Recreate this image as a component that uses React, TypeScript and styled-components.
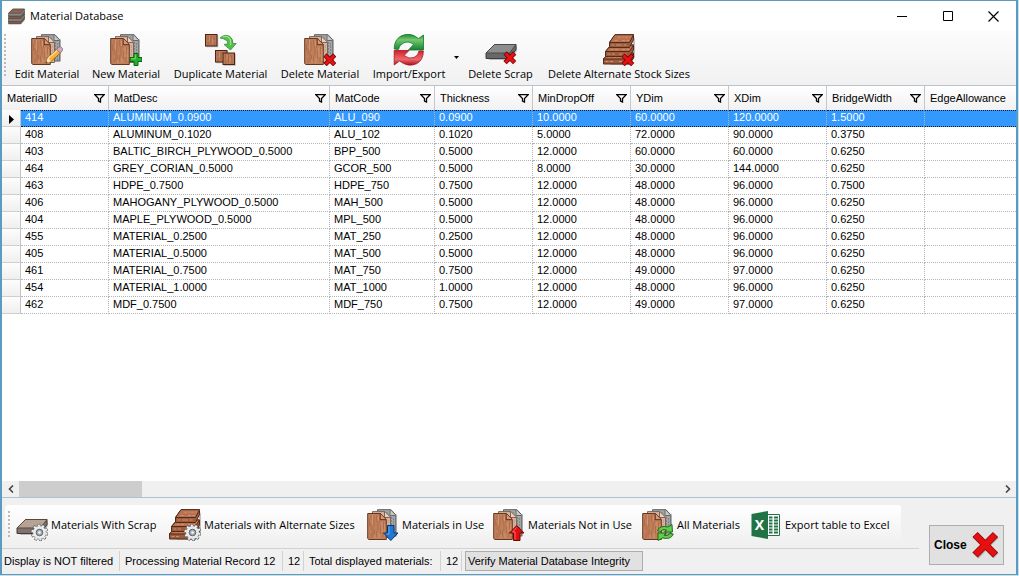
import React from "react";
import styled, { createGlobalStyle } from "styled-components";

const uiFont = `"Open Sans", "Noto Sans", sans-serif`;
const gridFont = `"Liberation Sans", Arial, sans-serif`;

const GlobalStyle = createGlobalStyle`
  * { box-sizing: border-box; }
  body { margin: 0; background: #cfdde4; }
  button { font: inherit; color: inherit; cursor: default; }
`;

const Window = styled.div`
  display: flex;
  flex-direction: column;
  min-height: calc(100vh - 1px);
  margin: 0 1px 1px 0;
  border: solid #5b9bbf;
  border-width: 1px 2px 1px 2px;
  background: #f0f0f0;
  color: #000;
  font: 11px/16px ${gridFont};
`;

const TitleBar = styled.header`
  display: flex;
  align-items: center;
  height: 30px;
  padding-left: 6px;
  background: #fff;
  font-family: ${uiFont};
`;

const Title = styled.h1`
  flex: 1;
  margin: 0 0 0 5px;
  font-size: 11px;
  font-weight: 400;
`;

const CaptionButton = styled.button`
  display: flex;
  align-items: center;
  justify-content: center;
  width: 46px;
  height: 30px;
  padding: 0;
  border: 0;
  background: none;
`;

const ToolBar = styled.nav`
  display: flex;
  gap: 1px;
  height: 54px;
  padding: 3px 2px 0;
  background: linear-gradient(#fcfcfc, #f1f1f1);
  font: 500 11px/16px ${uiFont};
`;

const Grip = styled.span<{ $height: number }>`
  width: 2px;
  height: ${(p) => p.$height}px;
  margin-right: 2px;
  background: repeating-linear-gradient(#bcb8bc 0 2px, transparent 2px 4px);
`;

const ToolButton = styled.button<{ $label: number }>`
  display: flex;
  flex-direction: column;
  align-items: center;
  width: ${(p) => p.$label + 10}px;
  padding: 0;
  border: 0;
  background: none;
  white-space: nowrap;
`;

const Split = styled.div`
  display: flex;
`;

const SplitArrow = styled.button`
  display: flex;
  align-items: center;
  justify-content: center;
  width: 9px;
  padding: 0 0 4px;
  border: 0;
  background: none;
`;

const GridArea = styled.main`
  display: flex;
  flex: 1;
  flex-direction: column;
  border-top: 1px solid #b9c3cd;
  border-bottom: 1px solid #a9c2d6;
  background: #fff;
`;

const TableClip = styled.div`
  flex: 1;
  overflow: hidden;
`;

const Table = styled.table`
  width: 100%;
  table-layout: fixed;
  border-collapse: separate;
  border-spacing: 0;
`;

const HeadCell = styled.th`
  height: 24px;
  padding: 0 3px 0 5px;
  border-right: 1px solid #c4c8cc;
  background: linear-gradient(#fff, #f1f1f1);
  font-weight: 400;
  text-align: left;
  white-space: nowrap;
  &:last-child { border-right: 0; }
`;

const HeadInner = styled.div`
  display: flex;
  align-items: center;
  justify-content: space-between;
`;

const FilterButton = styled.button`
  display: flex;
  padding: 0;
  border: 0;
  background: none;
`;

const Cell = styled.td`
  height: 17px;
  padding: 0 0 2px 4px;
  border-right: 1px dotted #b4b4b4;
  border-bottom: 1px dotted #b4b4b4;
  line-height: 14px;
  white-space: nowrap;
  &:last-child { border-right: 0; }
`;

const Selector = styled.th`
  height: 17px;
  padding: 3px 0 0 7px;
  border-right: 1px solid #c6c6c6;
  border-bottom: 1px solid #cfcfcf;
  background: linear-gradient(#fdfdfd, #efefef);
  line-height: 0;
  text-align: left;
`;

const Row = styled.tr<{ $selected: boolean }>`
  ${(p) =>
    p.$selected &&
    `color: #fff;
     ${Cell} {
       background: #3399ff;
       border-bottom: 1px dotted #001d3d;
       border-top: 1px dotted #001d3d;
       padding-bottom: 3px;
       line-height: 12px;
     }`}
`;

const ScrollBar = styled.div`
  display: flex;
  align-items: stretch;
  height: 16px;
  background: #f0f0f0;
`;

const ScrollButton = styled.button`
  display: flex;
  align-items: center;
  justify-content: center;
  width: 17px;
  padding: 0;
  border: 0;
  background: none;
`;

const ScrollTrack = styled.div`
  flex: 1;
`;

const ScrollThumb = styled.div`
  width: 12.5%;
  height: 100%;
  background: #cdcdcd;
`;

const Footer = styled.footer`
  display: flex;
  height: 76px;
`;

const FooterMain = styled.div`
  flex: 0 0 917px;
`;

const FilterBar = styled.nav`
  display: flex;
  align-items: center;
  width: 896px;
  height: 38px;
  margin: 7px 0 0 3px;
  padding: 2px 3px 0;
  border-radius: 3px;
  background: linear-gradient(#fff, #f5f5f5 70%, #f0f0f0);
  font: 500 11px/16px ${uiFont};
`;

const FilterItem = styled.button<{ $label: number }>`
  display: flex;
  align-items: center;
  gap: 3px;
  width: ${(p) => p.$label + 43}px;
  padding: 0 4px;
  border: 0;
  background: none;
  text-align: left;
  white-space: nowrap;
`;

const StatusBar = styled.div`
  display: flex;
  align-items: center;
  margin-top: 5px;
  padding-top: 2px;
  border-top: 1px solid #d2d2d2;
`;

const StatusField = styled.output<{ $width: number; $pad?: number }>`
  width: ${(p) => p.$width}px;
  height: 20px;
  padding-left: ${(p) => p.$pad ?? 5}px;
  border-right: 1px solid #d2d2d2;
  line-height: 20px;
  white-space: nowrap;
`;

const VerifyButton = styled.button`
  width: 178px;
  height: 20px;
  margin-left: 3px;
  padding: 0 2px;
  border: 1px solid #adadad;
  background: #e1e1e1;
  text-align: left;
  white-space: nowrap;
`;

const CloseButton = styled.button`
  display: flex;
  align-items: center;
  justify-content: space-between;
  width: 75px;
  height: 40px;
  margin: 27px 12px 0 auto;
  padding: 0 3px 0 4px;
  border: 1px solid #adadad;
  background: #e1e1e1;
  font-size: 12px;
  font-weight: 700;
`;

/* ---------- drawings ---------- */

const Drawing = styled.svg`
  flex-shrink: 0;
`;

const Icon = ({ children, size = 32 }: { children: React.ReactNode; size?: number }) => (
  <Drawing width={size} height={size} viewBox="0 0 32 32" aria-hidden="true">
    {children}
  </Drawing>
);

const Sheets = () => (
  <g strokeWidth="1" strokeLinejoin="round">
    <path d="M12 27.500H30V6l-1-2v23z" fill="#777" opacity=".35" />
    <path d="M10.500.7H24l4.800 5.300V27H10.500z" fill="#a3a6a6" stroke="#5c5f60" />
    <path d="M23 1v5.500h5.500" fill="#c9cbcb" stroke="#66696a" />
    <path d="M22 9v16M24.500 8v17M26.500 9v17M20 3v5M17 2v3M14 2v2" stroke="#818485" strokeDasharray="2 1" fill="none" />
    <path d="M5.500 2.600H18l5.500 5.600V28.500H5.500z" fill="#d8b39d" stroke="#7d6459" />
    <path d="M17.500 3v5.500h5.500" fill="#e9cfbf" stroke="#7d6459" />
    <path d="M21.300 11v15" stroke="#c39c86" strokeDasharray="3 1" />
    <path d="M.7 4.500H13.500l5.800 6V30.500H2L.7 29.500z" fill="#c07f59" stroke="#653822" />
    <path d="M4 6v5M4 14v7M4 24v5M7 7v8l-1 4v9M9.500 6v5l1.500 4v5l-1.500 3v5M12.500 10v4M13.500 17v8M16.500 13v7M16 23v5M2.500 10v7M7.500 21v4" stroke="#a9694a" strokeWidth=".8" fill="none" />
    <path d="M5.500 6v10M11.500 7v5M15 13v10M8 26v3M12 24v5M17.800 15v12" stroke="#d3997a" strokeWidth=".8" fill="none" />
    <path d="M13.200 4.700v6h5.800" fill="#d69a76" stroke="#5a2c18" />
  </g>
);

const RedCross = () => (
  <g fill="none">
    <path d="M21 21l9.700 9.700M30.700 21L21 30.700" stroke="#7c0808" strokeWidth="4.600" />
    <path d="M21.500 21.500l8.700 8.700M30.200 21.500l-8.700 8.700" stroke="#e81212" strokeWidth="3" />
  </g>
);

const Gear = () => (
  <g>
    <circle cx="23.500" cy="23.500" r="7" fill="none" stroke="#555" strokeWidth="3.400" strokeDasharray="2.600 1.800" />
    <circle cx="23.500" cy="23.500" r="6.800" fill="#e9ecee" stroke="#555" strokeWidth=".6" />
    <circle cx="23.500" cy="23.500" r="7" fill="none" stroke="#edf0f1" strokeWidth="2.200" strokeDasharray="2 2.400" strokeDashoffset="-.3" />
    <circle cx="23.500" cy="23.500" r="3.300" fill="#a5acb0" stroke="#5d6367" />
    <circle cx="23.500" cy="23.500" r="1.200" fill="#f5f6f6" />
  </g>
);

const boardSteps = [
  { left: 0.5, back: 6, top: 19, front: 25 },
  { left: 2.5, back: 8, top: 11, front: 17.5 },
  { left: 6.5, back: 12, top: 0.7, front: 8.5 },
];

const Boards = () => (
  <g strokeWidth="1" strokeLinejoin="round">
    <path d="M6 31h21l5-8V3l-2 4v14z" fill="#555" opacity=".35" />
    {boardSteps.map(({ left, back, top, front }) => (
      <g key={left}>
        <path d={`M${left} ${front}L${back} ${top}H30.500V${top + 5}L26.500 ${front + 5}H${left}z`} fill="#9c5b3d" stroke="#542a19" />
        <path d={`M${left} ${front}L${back} ${top}H30.500L26.500 ${front}z`} fill="#b87352" stroke="#542a19" />
        <path d={`M${left + 5} ${front - 2}H16M19 ${front - 2}h7M${back + 3} ${top + 2.500}h6M22 ${top + 2.500}h6M${left + 2} ${front + 2.500}h9M16 ${front + 2.500}h9`} stroke="#cf8f6e" strokeDasharray="3 1.500" />
      </g>
    ))}
  </g>
);

const Slab = ({ top, side }: { top: string; side: string }) => (
  <g strokeLinejoin="round">
    <path d="M3 26h22l7-9v-5z" fill="#666" opacity=".4" />
    <path d="M1 19L9.500 10.500H31v5L24.500 24.500H1z" fill={side} stroke="#3e3b3a" />
    <path d="M1 19L9.500 10.500H31L24.500 19z" fill={top} stroke="#4e4946" />
    <path d="M24.500 19v5.500" stroke="#4e4946" />
  </g>
);

const WoodTile = ({ x, y }: { x: number; y: number }) => (
  <g transform={`translate(${x} ${y})`}>
    <rect x="1.200" y="1.200" width="12" height="12" fill="#777" opacity=".5" />
    <rect x=".5" y=".5" width="11.500" height="11.500" fill="#b87755" stroke="#4b2414" />
    <path d="M3 2v4M3 8v3M6 2v8M9 3v3M9.500 8v3" stroke="#a0603f" strokeWidth=".8" />
    <path d="M4.500 2v5M7.500 4v6" stroke="#d29572" strokeWidth=".8" />
  </g>
);

const EditIcon = () => (
  <Icon>
    <Sheets />
    <path d="M14.500 29.500l2.500-6L27 14.500l3.500 3.500L20 27.500z" fill="#f7b03b" stroke="#93601c" strokeWidth=".8" />
    <path d="M17.500 24l9.800-8.500" stroke="#ffe19a" strokeWidth="1.200" />
    <path d="M25.500 15.500l2.500-2.700q1.800-.6 3.500 1.700l.2 1.700-2.500 2.500z" fill="#d7a9bd" stroke="#83647b" strokeWidth=".8" />
    <path d="M14.500 29.500l2.500-6 3 4z" fill="#ffe5b5" />
    <path d="M14.500 29.500l1-2.500 1.200 1.500z" fill="#333" />
  </Icon>
);

const NewIcon = () => (
  <Icon>
    <Sheets />
    <path d="M24 19.500h4v4h4v4h-4v4h-4v-4h-4v-4h4z" fill="#26ad2c" stroke="#0a6411" />
    <path d="M25.300 20.500v4.300h-4.300" stroke="#7ddd72" fill="none" />
  </Icon>
);

const DuplicateIcon = () => (
  <Icon>
    <WoodTile x={0} y={0} />
    <WoodTile x={10} y={16} />
    <WoodTile x={17.5} y={18.5} />
    <path d="M15 4Q20-.5 25 2.500 28 5 28 9.500h3.200L25.500 16 19 10.500l4-.8Q22.500 5 15 4z" fill="#54bd4c" stroke="#298736" strokeWidth=".7" />
    <path d="M18 3Q23 1 25.500 6v5" stroke="#9be486" strokeWidth="1.300" fill="none" />
  </Icon>
);

const DeleteIcon = () => (
  <Icon>
    <Sheets />
    <RedCross />
  </Icon>
);

const SyncIcon = () => (
  <Icon>
    <defs>
      <linearGradient id="syncGreen" x2="0" y2="1">
        <stop offset="0" stopColor="#188a31" />
        <stop offset=".35" stopColor="#74c96c" />
        <stop offset="1" stopColor="#128235" />
      </linearGradient>
      <linearGradient id="syncRed" x2="0" y2="1">
        <stop offset="0" stopColor="#d21f2a" />
        <stop offset=".6" stopColor="#ed6a6a" />
        <stop offset="1" stopColor="#a90e1e" />
      </linearGradient>
    </defs>
    <path d="M1.200 15Q1 6 8 2 17-2.500 25.500 4.500L30.500 1v15H15.500l5-5.500Q16 6.500 10.500 9 6 11 5.500 15.500z" fill="url(#syncGreen)" stroke="#15752c" strokeWidth=".8" />
    <path d="M30.300 17Q30.500 26 23.500 29.800 15 33.500 6.500 27L1.200 31V16.500H16L11 21.500Q16 25.500 21 23.500 25.500 21.500 26 17z" fill="url(#syncRed)" stroke="#a21521" strokeWidth=".8" />
  </Icon>
);

const DeleteScrapIcon = () => (
  <Icon>
    <Slab top="#8b8f90" side="#66696b" />
    <g transform="translate(-1 -2)">
      <RedCross />
    </g>
  </Icon>
);

const DeleteBoardsIcon = () => (
  <Icon>
    <Boards />
    <g transform="translate(-1 0)">
      <RedCross />
    </g>
  </Icon>
);

const ScrapIcon = () => (
  <Icon>
    <Slab top="#b8a294" side="#83726a" />
    <Gear />
  </Icon>
);

const BoardsGearIcon = () => (
  <Icon>
    <Boards />
    <Gear />
  </Icon>
);

const InUseIcon = () => (
  <Icon>
    <Sheets />
    <path d="M20.500 16.500h6.500v7.500h4L23.800 31.500 16.500 24h4z" fill="#1f78d4" stroke="#0b3769" />
    <path d="M22 17.500v7.500h-2.500" stroke="#64adf0" fill="none" />
  </Icon>
);

const NotInUseIcon = () => (
  <Icon>
    <Sheets />
    <path d="M20.500 31.500h6.500V24h4L23.800 16.500 16.500 24h4z" fill="#e01010" stroke="#6d0606" />
    <path d="M22 30.500V23h-2.500l4-4.500" stroke="#f66" fill="none" />
  </Icon>
);

const AllIcon = () => (
  <Icon>
    <Sheets />
    <path d="M15.500 21.500q2.500-5.500 10.500-3.500l4-2.500.5 7.500h-8l2-2q-4-1.500-6 1.500z" fill="#5fd044" stroke="#176118" strokeWidth=".9" />
    <path d="M31.300 25q-2.500 6-10.500 4l-4.800 2.500V24h8l-2 2.200q4 1.300 6-1.700z" fill="#5fd044" stroke="#176118" strokeWidth=".9" />
  </Icon>
);

const ExcelIcon = () => (
  <Icon>
    <path d="M17 5.500h12.500v21H17z" fill="#fff" stroke="#217346" />
    {[8, 11, 14, 17, 20, 23].map((y) => (
      <path key={y} d={`M19 ${y + 0.5}h3.500M24 ${y + 0.5}h4`} stroke="#217346" strokeWidth="2" />
    ))}
    <path d="M1.500 5L18 2v28L1.500 27z" fill="#217346" />
    <text x="9.500" y="21" textAnchor="middle" fontFamily="Open Sans, sans-serif" fontWeight="700" fontSize="14" fill="#fff">
      X
    </text>
  </Icon>
);

const AppIcon = () => (
  <Icon size={17}>
    {[22, 17, 12, 7].map((y, i) => (
      <g key={y} stroke="#4a3c38" strokeLinejoin="round">
        <path d={`M1 ${y + 3}L9 ${y - 5}H31v5L24 ${y + 8}H1z`} fill={i % 2 ? "#8a8886" : "#7d5c50"} />
        <path d={`M1 ${y + 3}L9 ${y - 5}H31L24 ${y + 3}z`} fill={i === 3 ? "#8b6455" : "#94918e"} />
      </g>
    ))}
  </Icon>
);

const Funnel = () => (
  <svg width="11" height="9" viewBox="0 0 11 9" aria-hidden="true">
    <path d="M.8.700H10.200L6.500 4.500V8L4.500 7V4.500z" fill="#fff" stroke="#000" strokeWidth="1.300" />
  </svg>
);

/* ---------- data ---------- */

const tools = [
  { label: "Edit Material", width: 66, icon: <EditIcon /> },
  { label: "New Material", width: 70, icon: <NewIcon /> },
  { label: "Duplicate Material", width: 97, icon: <DuplicateIcon /> },
  { label: "Delete Material", width: 80, icon: <DeleteIcon /> },
  { label: "Import/Export", width: 76, icon: <SyncIcon />, menu: true },
  { label: "Delete Scrap", width: 67, icon: <DeleteScrapIcon /> },
  { label: "Delete Alternate Stock Sizes", width: 148, icon: <DeleteBoardsIcon /> },
];

const filters = [
  { label: "Materials With Scrap", width: 110, icon: <ScrapIcon /> },
  { label: "Materials with Alternate Sizes", width: 155, icon: <BoardsGearIcon /> },
  { label: "Materials in Use", width: 83, icon: <InUseIcon /> },
  { label: "Materials Not in Use", width: 106, icon: <NotInUseIcon /> },
  { label: "All Materials", width: 65, icon: <AllIcon /> },
  { label: "Export table to Excel", width: 107, icon: <ExcelIcon /> },
];

const columns = ["MaterialID", "MatDesc", "MatCode", "Thickness", "MinDropOff", "YDim", "XDim", "BridgeWidth", "EdgeAllowance"];
const columnWidths = [19, 88, 221, 105, 98, 98, 98, 98, 98];

const rows = [
  ["414", "ALUMINUM_0.0900", "ALU_090", "0.0900", "10.0000", "60.0000", "120.0000", "1.5000"],
  ["408", "ALUMINUM_0.1020", "ALU_102", "0.1020", "5.0000", "72.0000", "90.0000", "0.3750"],
  ["403", "BALTIC_BIRCH_PLYWOOD_0.5000", "BPP_500", "0.5000", "12.0000", "60.0000", "60.0000", "0.6250"],
  ["464", "GREY_CORIAN_0.5000", "GCOR_500", "0.5000", "8.0000", "30.0000", "144.0000", "0.6250"],
  ["463", "HDPE_0.7500", "HDPE_750", "0.7500", "12.0000", "48.0000", "96.0000", "0.7500"],
  ["406", "MAHOGANY_PLYWOOD_0.5000", "MAH_500", "0.5000", "12.0000", "48.0000", "96.0000", "0.6250"],
  ["404", "MAPLE_PLYWOOD_0.5000", "MPL_500", "0.5000", "12.0000", "48.0000", "96.0000", "0.6250"],
  ["455", "MATERIAL_0.2500", "MAT_250", "0.2500", "12.0000", "48.0000", "96.0000", "0.6250"],
  ["405", "MATERIAL_0.5000", "MAT_500", "0.5000", "12.0000", "48.0000", "96.0000", "0.6250"],
  ["461", "MATERIAL_0.7500", "MAT_750", "0.7500", "12.0000", "49.0000", "97.0000", "0.6250"],
  ["454", "MATERIAL_1.0000", "MAT_1000", "1.0000", "12.0000", "48.0000", "96.0000", "0.6250"],
  ["462", "MDF_0.7500", "MDF_750", "0.7500", "12.0000", "49.0000", "97.0000", "0.6250"],
];

export default function App() {
  return (
    <>
      <GlobalStyle />
      <Window>
        <TitleBar>
          <AppIcon />
          <Title>Material Database</Title>
          <CaptionButton aria-label="Minimize">
            <svg width="11" height="11"><path d="M1 5.500h10" stroke="#000" /></svg>
          </CaptionButton>
          <CaptionButton aria-label="Maximize">
            <svg width="11" height="11"><path d="M1.500.500h9v9h-9z" fill="none" stroke="#000" /></svg>
          </CaptionButton>
          <CaptionButton aria-label="Close window">
            <svg width="11" height="11"><path d="M.5.500l10 10M10.500.500l-10 10" stroke="#000" strokeWidth="1.200" /></svg>
          </CaptionButton>
        </TitleBar>

        <ToolBar>
          <Grip $height={44} />
          {tools.map((t) => {
            const button = (
              <ToolButton key={t.label} $label={t.width}>
                {t.icon}
                {t.label}
              </ToolButton>
            );
            return t.menu ? (
              <Split key={t.label}>
                {button}
                <SplitArrow aria-label="Import/Export options">
                  <svg width="5" height="3"><path d="M0 0h5L2.500 3z" /></svg>
                </SplitArrow>
              </Split>
            ) : (
              button
            );
          })}
        </ToolBar>

        <GridArea>
          <TableClip>
            <Table>
              <colgroup>
                {columnWidths.map((w, i) => <col key={i} width={w} />)}
                <col />
              </colgroup>
              <thead>
                <tr>
                  {columns.map((c, i) => (
                    <HeadCell key={c} colSpan={i === 0 ? 2 : 1}>
                      <HeadInner>
                        {c}
                        {i < columns.length - 1 && (
                          <FilterButton aria-label={`Filter ${c}`}><Funnel /></FilterButton>
                        )}
                      </HeadInner>
                    </HeadCell>
                  ))}
                </tr>
              </thead>
              <tbody>
                {rows.map((r, i) => (
                  <Row key={r[0]} $selected={i === 0}>
                    <Selector scope="row">
                      {i === 0 && <svg width="5" height="9"><path d="M0 0l5 4.500L0 9z" /></svg>}
                    </Selector>
                    {r.map((v, j) => <Cell key={j}>{v}</Cell>)}
                    <Cell />
                  </Row>
                ))}
              </tbody>
            </Table>
          </TableClip>
          <ScrollBar>
            <ScrollButton aria-label="Scroll left">
              <svg width="6" height="8"><path d="M5 .5L1.500 4 5 7.500" fill="none" stroke="#444" strokeWidth="1.600" /></svg>
            </ScrollButton>
            <ScrollTrack><ScrollThumb /></ScrollTrack>
            <ScrollButton aria-label="Scroll right">
              <svg width="6" height="8"><path d="M1 .5L4.500 4 1 7.500" fill="none" stroke="#444" strokeWidth="1.600" /></svg>
            </ScrollButton>
          </ScrollBar>
        </GridArea>

        <Footer>
          <FooterMain>
            <FilterBar>
              <Grip $height={28} />
              {filters.map((f) => (
                <FilterItem key={f.label} $label={f.width}>
                  {f.icon}
                  {f.label}
                </FilterItem>
              ))}
            </FilterBar>
            <StatusBar>
              <StatusField $width={118} $pad={2}>Display is NOT filtered</StatusField>
              <StatusField $width={163}>Processing Material Record 12</StatusField>
              <StatusField $width={21}>12</StatusField>
              <StatusField $width={137}>Total displayed materials:</StatusField>
              <StatusField $width={21}>12</StatusField>
              <VerifyButton>Verify Material Database Integrity</VerifyButton>
            </StatusBar>
          </FooterMain>
          <CloseButton>
            Close
            <svg width="29" height="30" viewBox="0 0 29 30" aria-hidden="true">
              <path d="M5 5.500L25 26M25 5.500L5 26" stroke="#777" strokeWidth="7" opacity=".5" />
              <path d="M4 4.500L24.500 25M24.500 4.500L4 25" stroke="#8e0a0a" strokeWidth="7.400" />
              <path d="M4.500 5L24 24.500M24 5L4.500 24.500" stroke="#e90f0f" strokeWidth="5.600" />
            </svg>
          </CloseButton>
        </Footer>
      </Window>
    </>
  );
}
